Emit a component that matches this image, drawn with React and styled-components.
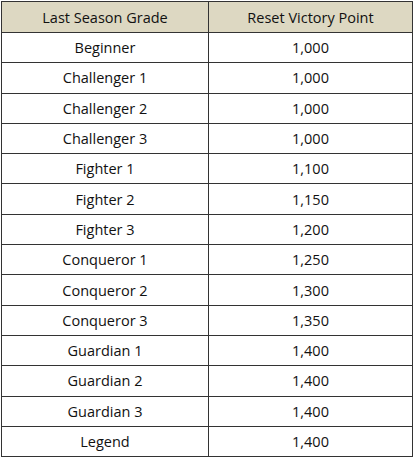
import styled, { createGlobalStyle } from "styled-components";

const GlobalStyle = createGlobalStyle`
  html, body {
    margin: 0;
    padding: 0;
    background: #ffffff;
  }
  body {
    font-family: "Open Sans", "Noto Sans", sans-serif;
  }
`;

const Wrapper = styled.div`
  padding: 1px 0 0 1px;
`;

const Table = styled.table`
  width: 412px;
  border-collapse: collapse;
  table-layout: fixed;
  color: #111111;
  font-size: 14.5px;
`;

const HeadCell = styled.th`
  height: 30px;
  padding: 0;
  border: 1px solid #333333;
  background: #ddd8c2;
  font-weight: 400;
  text-align: center;
  width: ${(p) => p.$w || "auto"};
`;

const Cell = styled.td`
  height: 29.3px;
  padding: 0;
  border: 1px solid #333333;
  text-align: center;
`;

const rows = [
  ["Beginner", "1,000"],
  ["Challenger 1", "1,000"],
  ["Challenger 2", "1,000"],
  ["Challenger 3", "1,000"],
  ["Fighter 1", "1,100"],
  ["Fighter 2", "1,150"],
  ["Fighter 3", "1,200"],
  ["Conqueror 1", "1,250"],
  ["Conqueror 2", "1,300"],
  ["Conqueror 3", "1,350"],
  ["Guardian 1", "1,400"],
  ["Guardian 2", "1,400"],
  ["Guardian 3", "1,400"],
  ["Legend", "1,400"],
];

const App = () => {
  return (
    <Wrapper>
      <GlobalStyle />
      <Table>
        <thead>
          <tr>
            <HeadCell $w="206px">Last Season Grade</HeadCell>
            <HeadCell>Reset Victory Point</HeadCell>
          </tr>
        </thead>
        <tbody>
          {rows.map(([grade, point]) => (
            <tr key={grade}>
              <Cell>{grade}</Cell>
              <Cell>{point}</Cell>
            </tr>
          ))}
        </tbody>
      </Table>
    </Wrapper>
  );
};

export default App;
